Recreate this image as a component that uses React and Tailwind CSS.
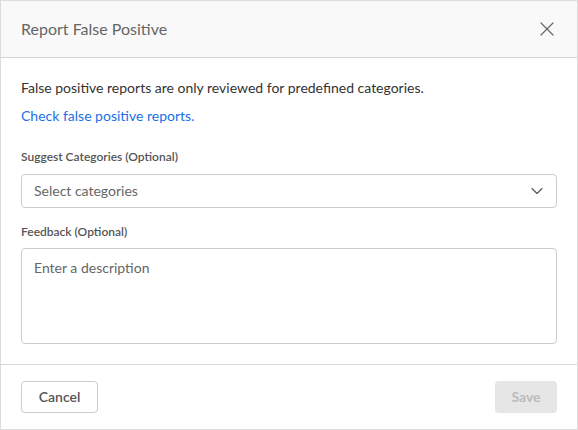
import { X, ChevronDown } from 'lucide-react';

const App = () => {
  return (
    <div className="w-[578px] h-[430px] bg-white border border-[#dcdcdc] flex flex-col font-['Lato','Liberation_Sans',sans-serif] text-[#333]">
      <div className="h-[57px] shrink-0 bg-[#f9f9f9] border-b border-[#d6d6d6] flex items-center justify-between pl-5 pr-[18px]">
        <h2 className="text-[16px] text-[#666]">Report False Positive</h2>
        <X size={24} strokeWidth={1.2} className="text-[#666]" />
      </div>

      <div className="flex-1 px-5 pt-[20px]">
        <p className="text-[14px] leading-5">False positive reports are only reviewed for predefined categories.</p>
        <a className="block mt-2 text-[14px] leading-5 text-[#1a6fe8]">Check false positive reports.</a>

        <label className="block mt-[23px] text-[12px] leading-4 font-semibold text-[#555]">Suggest Categories (Optional)</label>
        <div className="mt-[9px] h-[34px] border border-[#ccc] rounded-[4px] flex items-center justify-between pl-3 pr-[9px] pb-[1px]">
          <span className="text-[14px] text-[#666]">Select categories</span>
          <ChevronDown size={20} strokeWidth={1.3} className="text-[#555]" />
        </div>

        <label className="block mt-[16px] text-[12px] leading-4 font-semibold text-[#555]">Feedback (Optional)</label>
        <div className="mt-[8px] h-[96px] border border-[#ccc] rounded-[4px] px-3 pt-[6px]">
          <span className="text-[14px] text-[#666]">Enter a description</span>
        </div>
      </div>

      <div className="h-[65px] shrink-0 border-t border-[#d6d6d6] flex items-center justify-between px-5 pb-[1px]">
        <button className="h-[32px] w-[77px] border border-[#ccc] rounded-[4px] text-[14px] font-semibold text-[#555]">Cancel</button>
        <button className="h-[32px] w-[62px] bg-[#e6e6e6] rounded-[4px] text-[14px] font-bold text-[#bbb]">Save</button>
      </div>
    </div>
  );
};

export default App;
